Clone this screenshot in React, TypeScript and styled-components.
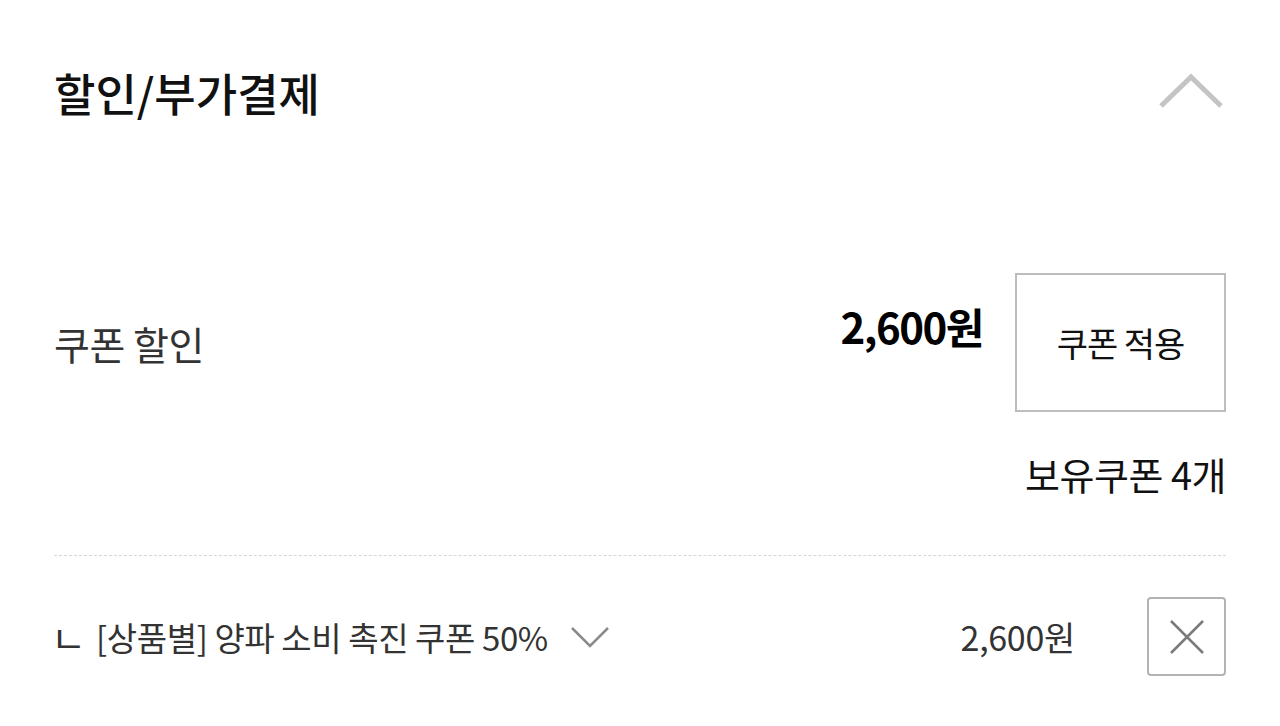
import React from 'react';
import styled, { createGlobalStyle } from 'styled-components';

const GlobalStyle = createGlobalStyle`
    body {
        margin: 0;
        background: #ffffff;
        font-family: "Noto Sans CJK KR", "Noto Sans", sans-serif;
        color: #111;
    }
`;

const Panel = styled.div`
    padding: 0 54px;
    width: 1280px;
    box-sizing: border-box;
`;

const Header = styled.div`
    height: 190px;
    display: flex;
    align-items: center;
    justify-content: space-between;
`;

const Title = styled.h2`
    margin: 0 0 4px;
    font-size: 45px;
    line-height: 46px;
    font-weight: 500;
    letter-spacing: 0;
    color: #111;
`;

const Toggle = styled.button`
    border: 0;
    background: none;
    padding: 0;
    margin: 0 2px 8px 0;
    display: flex;
    cursor: pointer;
`;

const CouponRow = styled.div`
    margin-top: 83px;
    display: flex;
    align-items: center;
    justify-content: space-between;
`;

const Label = styled.span`
    font-size: 39px;
    line-height: 44px;
    color: #333;
    letter-spacing: -0.5px;
`;

const RightGroup = styled.div`
    display: flex;
    align-items: center;
    gap: 32px;
`;

const Amount = styled.span`
    font-size: 42px;
    line-height: 44px;
    font-weight: 700;
    letter-spacing: -1.5px;
    color: #000;
    margin-bottom: 34px;
`;

const ApplyButton = styled.button`
    width: 211px;
    height: 139px;
    box-sizing: border-box;
    border: 2px solid #bdbdbd;
    background: #fff;
    font-family: inherit;
    font-size: 34px;
    letter-spacing: -1px;
    color: #111;
    padding: 0;
    cursor: pointer;
`;

const Owned = styled.div`
    margin-top: 41px;
    text-align: right;
    font-size: 38px;
    line-height: 42px;
    color: #111;
    letter-spacing: -0.5px;
`;

const Divider = styled.hr`
    margin: 60px 0 0;
    border: 0;
    border-top: 1px dashed #d6d6d6;
`;

const AppliedRow = styled.div`
    margin-top: 41px;
    display: flex;
    align-items: center;
`;

const Branch = styled.span`
    font-size: 38px;
    line-height: 40px;
    color: #333;
    width: 42px;
    margin-left: -3px;
    margin-right: 3px;
`;

const CouponName = styled.span`
    font-size: 33px;
    line-height: 40px;
    color: #333;
    letter-spacing: -0.4px;
`;

const Expand = styled.span`
    display: flex;
    margin-left: 22px;
`;

const AppliedAmount = styled.span`
    margin-left: auto;
    font-size: 34px;
    line-height: 40px;
    color: #333;
    letter-spacing: -0.3px;
`;

const RemoveButton = styled.button`
    margin-left: 72px;
    width: 79px;
    height: 79px;
    box-sizing: border-box;
    border: 2px solid #b3b3b3;
    border-radius: 4px;
    background: #fff;
    display: flex;
    align-items: center;
    justify-content: center;
    padding: 0;
    cursor: pointer;
`;

const App = () => {
    return (
        <Panel>
            <GlobalStyle />
            <Header>
                <Title>할인/부가결제</Title>
                <Toggle aria-label="접기">
                    <svg width="66" height="36" viewBox="0 0 66 36">
                        <polyline points="3,33 33,4 63,33" fill="none" stroke="#c4c4c4" strokeWidth="5" />
                    </svg>
                </Toggle>
            </Header>

            <CouponRow>
                <Label>쿠폰 할인</Label>
                <RightGroup>
                    <Amount>2,600원</Amount>
                    <ApplyButton>쿠폰 적용</ApplyButton>
                </RightGroup>
            </CouponRow>
            <Owned>보유쿠폰 4개</Owned>

            <Divider />

            <AppliedRow>
                <Branch>ㄴ</Branch>
                <CouponName>[상품별] 양파 소비 촉진 쿠폰 50%</CouponName>
                <Expand>
                    <svg width="40" height="24" viewBox="0 0 40 24">
                        <polyline points="2,3 20,21 38,3" fill="none" stroke="#8a8a8a" strokeWidth="2.5" />
                    </svg>
                </Expand>
                <AppliedAmount>2,600원</AppliedAmount>
                <RemoveButton aria-label="삭제">
                    <svg width="38" height="38" viewBox="0 0 38 38">
                        <path d="M3 3L35 35M35 3L3 35" stroke="#7a7a7a" strokeWidth="2.5" />
                    </svg>
                </RemoveButton>
            </AppliedRow>
        </Panel>
    );
};

export default App;
